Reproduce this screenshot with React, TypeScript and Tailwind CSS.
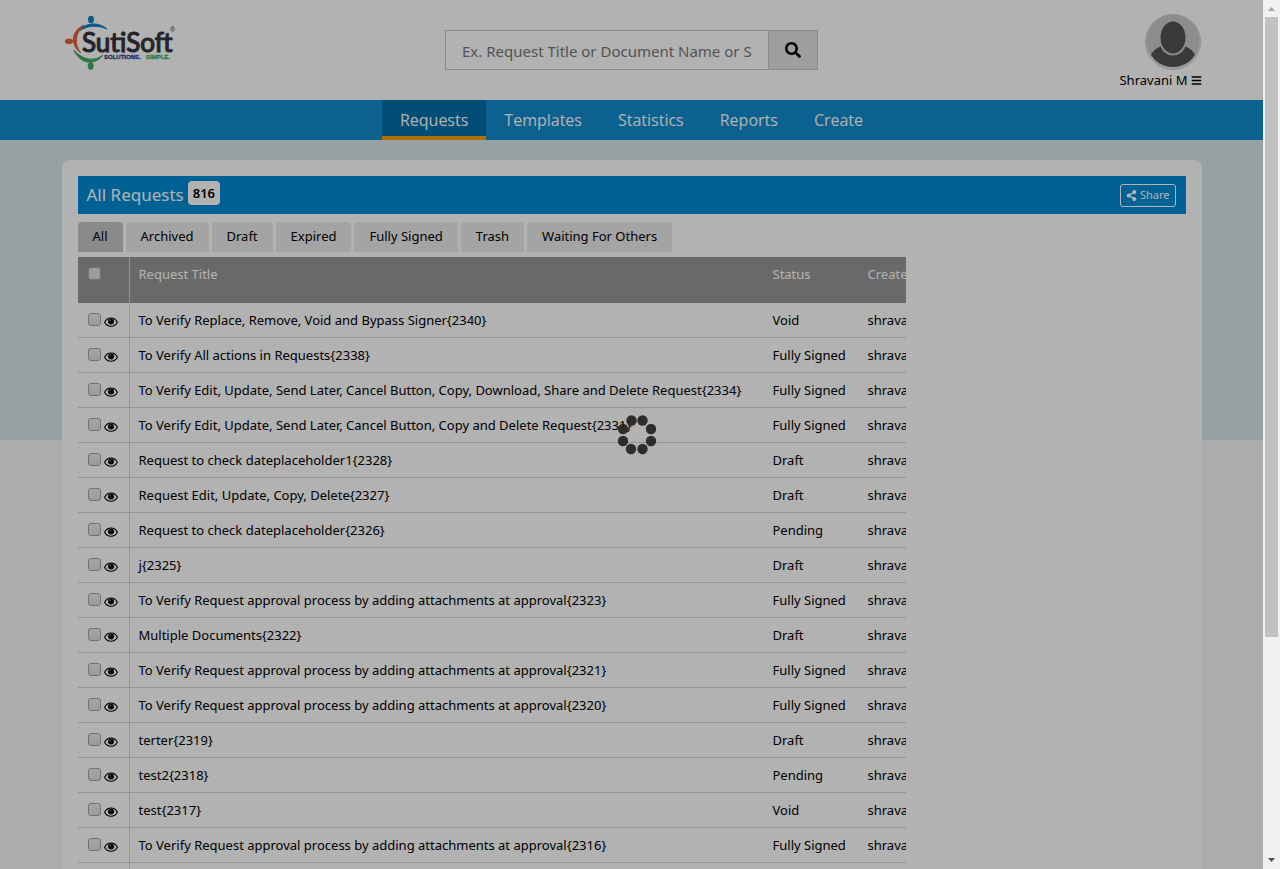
import { FaBars, FaSearch, FaShareAlt } from "react-icons/fa";

type Row = { title: string; status: string };

const rows: Row[] = [
  { title: "To Verify Replace, Remove, Void and Bypass Signer{2340}", status: "Void" },
  { title: "To Verify All actions in Requests{2338}", status: "Fully Signed" },
  { title: "To Verify Edit, Update, Send Later, Cancel Button, Copy, Download, Share and Delete Request{2334}", status: "Fully Signed" },
  { title: "To Verify Edit, Update, Send Later, Cancel Button, Copy and Delete Request{2331}", status: "Fully Signed" },
  { title: "Request to check dateplaceholder1{2328}", status: "Draft" },
  { title: "Request Edit, Update, Copy, Delete{2327}", status: "Draft" },
  { title: "Request to check dateplaceholder{2326}", status: "Pending" },
  { title: "j{2325}", status: "Draft" },
  { title: "To Verify Request approval process by adding attachments at approval{2323}", status: "Fully Signed" },
  { title: "Multiple Documents{2322}", status: "Draft" },
  { title: "To Verify Request approval process by adding attachments at approval{2321}", status: "Fully Signed" },
  { title: "To Verify Request approval process by adding attachments at approval{2320}", status: "Fully Signed" },
  { title: "terter{2319}", status: "Draft" },
  { title: "test2{2318}", status: "Pending" },
  { title: "test{2317}", status: "Void" },
  { title: "To Verify Request approval process by adding attachments at approval{2316}", status: "Fully Signed" },
];

const navItems = ["Requests", "Templates", "Statistics", "Reports", "Create"];
const tabs = ["All", "Archived", "Draft", "Expired", "Fully Signed", "Trash", "Waiting For Others"];

function Logo() {
  return (
    <svg width="112" height="58" viewBox="0 0 112 58" role="img" aria-label="SutiSoft">
      <path d="M15 17C21 9 33 7 43 15C34 11 24 11 15 17Z" fill="#0a80c4" stroke="#0a80c4" />
      <ellipse cx="27" cy="5.5" rx="3" ry="3.8" fill="#0a80c4" />
      <path d="M20 11C7 17 6 31 16.500 38.500C10 30 11 19 20 11Z" fill="#e0603a" stroke="#e0603a" />
      <ellipse cx="5" cy="27.300" rx="4" ry="2.800" fill="#e0603a" />
      <path d="M10 36C15 49 30 53 39 41C31 48 18 46 10 36Z" fill="#3fae62" stroke="#3fae62" />
      <ellipse cx="26.700" cy="52" rx="3" ry="3.800" fill="#3fae62" />
      <text x="18" y="38" fontSize="26" fill="#34363f" stroke="#34363f" strokeWidth="1.2" fontFamily="Lato, sans-serif">SutiSoft</text>
      <text x="40" y="45" fontSize="6" fontWeight="700" fill="#2c3d94" stroke="#2c3d94" strokeWidth=".3" fontFamily="'Liberation Sans', sans-serif">SOLUTIONS.</text>
      <text x="82" y="45" fontSize="6" fontWeight="700" fill="#3fae62" stroke="#3fae62" strokeWidth=".3" fontFamily="'Liberation Sans', sans-serif">SIMPLE.</text>
      <text x="106" y="18" fontSize="7" fill="#34363f" fontFamily="'Liberation Sans', sans-serif">®</text>
    </svg>
  );
}

function Avatar() {
  return (
    <svg width="56" height="56" viewBox="0 0 56 56" aria-hidden="true">
      <defs>
        <clipPath id="face">
          <circle cx="28" cy="27" r="26" />
        </clipPath>
      </defs>
      <circle cx="28" cy="28" r="27.500" fill="#e2e2e2" stroke="#d0d0d0" />
      <circle cx="28" cy="27" r="26.500" fill="#cbcbcb" />
      <path d="M3 47C6 38 11 34 15.500 32.500C18 38.500 23 41.500 28 41.500S38 38.500 40.500 32.500C45 34 50 38 53 47L40 60H16Z" fill="#525252" clipPath="url(#face)" />
      <ellipse cx="28" cy="23.500" rx="12.500" ry="16" fill="#525252" />
    </svg>
  );
}

function Eye() {
  return (
    <svg width="14" height="10" viewBox="0 0 14 10" aria-hidden="true">
      <path d="M.6 5.200C3.500-.4 10.500-.4 13.400 5.200C10.500 10.600 3.500 10.600 .6 5.200Z" fill="none" stroke="#000" strokeWidth="1.100" />
      <circle cx="7" cy="4.500" r="3" fill="#000" />
      <path d="M5.500 4.300A1.600 1.600 0 0 1 7 2.900" fill="none" stroke="#fff" strokeWidth=".6" />
    </svg>
  );
}

const box =
  "block size-[13px] shrink-0 appearance-none rounded-[3px] border border-[#a3a3a3] bg-linear-to-b from-[#ededed] to-[#dedede]";

function Loader() {
  const dots = [
    [14.500, 5.500], [25.500, 5.500], [34, 14], [34, 26],
    [25.500, 34], [14, 34], [6, 26], [6, 14],
  ];
  return (
    <svg width="40" height="40" viewBox="0 0 40 40" role="img" aria-label="Loading">
      {dots.map(([x, y]) => (
        <circle key={`${x}-${y}`} cx={x} cy={y} r="5.200" fill="#222" fillOpacity=".93" />
      ))}
    </svg>
  );
}

function Scrollbar() {
  return (
    <div aria-hidden="true" className="flex w-[17px] shrink-0 flex-col items-center bg-[#f1f1f1]">
      <svg width="17" height="17" viewBox="0 0 17 17">
        <path d="M5 11L8.500 7L12 11Z" fill="#a3a3a3" />
      </svg>
      <div className="flex w-[13px] flex-1 flex-col">
        <div className="h-[620px] bg-[#c1c1c1]" />
      </div>
      <svg width="17" height="17" viewBox="0 0 17 17">
        <path d="M5 6L8.500 10L12 6Z" fill="#505050" />
      </svg>
    </div>
  );
}

export default function App() {
  return (
    <div className="flex h-screen overflow-hidden font-['Noto_Sans','Open_Sans',sans-serif] text-[13px] leading-5 text-black">
      <div className="relative flex min-w-0 flex-1 flex-col overflow-hidden bg-white">
        <header className="flex h-[100px] shrink-0 justify-center">
          <div className="grid w-full max-w-[1140px] grid-cols-[1fr_373px_1fr]">
            <a href="#home" className="justify-self-start pt-[14px] pl-[2px]">
              <Logo />
            </a>
            <form className="mt-[30px] flex h-10 self-start" onSubmit={(e) => e.preventDefault()}>
              <input
                type="text"
                aria-label="Search requests"
                placeholder="Ex. Request Title or Document Name or S"
                className="min-w-0 flex-1 border border-r-0 border-[#c8c8c8] bg-white pt-[2px] pl-4 text-[15px] placeholder:text-[#777] placeholder:opacity-100"
              />
              <button type="submit" aria-label="Search" className="flex w-[50px] items-center justify-center border border-[#c8c8c8] bg-[#e4e4e4]">
                <FaSearch size={16} />
              </button>
            </form>
            <div className="flex flex-col items-end pt-[14px]">
              <button type="button" className="flex flex-col items-end">
                <span className="pr-px">
                  <Avatar />
                </span>
                <span className="flex items-center gap-[3px]">
                  Shravani M <FaBars size={11} />
                </span>
              </button>
            </div>
          </div>
        </header>

        <nav className="flex h-10 shrink-0 justify-center bg-[#148bcf] font-['Open_Sans','Noto_Sans',sans-serif] text-[16px] text-white">
          {navItems.map((item, i) => (
            <a
              key={item}
              href={`#${item.toLowerCase()}`}
              className={
                i === 0
                  ? "flex items-center border-b-4 border-[#f6a000] bg-[#006fab] px-[18px] pt-1"
                  : "flex items-center px-[18px]"
              }
            >
              {item}
            </a>
          ))}
        </nav>

        <main className="flex flex-1 justify-center bg-[linear-gradient(#d9e6ea_300px,#f7f7f7_300px)] pt-5">
          <section className="w-full max-w-[1140px] rounded-lg bg-white p-4">
            <div className="flex h-[38px] items-center bg-[#008cd5] pr-2 pl-[9px] text-white">
              <h1 className="text-[17px]">All Requests</h1>
              <span className="mb-1 ml-1 rounded-sm bg-white px-[5px] py-[2px] text-[13px] font-semibold text-black">816</span>
              <button type="button" className="mr-[2px] ml-auto flex h-[23px] items-center gap-[3px] rounded-[3px] border border-white px-[5px] text-[11px]">
                <FaShareAlt size={11} /> Share
              </button>
            </div>

            <div role="tablist" className="mt-2 flex gap-[3px]">
              {tabs.map((tab, i) => (
                <button
                  key={tab}
                  type="button"
                  role="tab"
                  aria-selected={i === 0}
                  className={
                    i === 0
                      ? "h-[30px] rounded-t-sm bg-[#c6c6c6] px-[15px] pb-[2px]"
                      : "h-[30px] rounded-t-sm bg-[#ebebeb] px-[15px] pb-[2px]"
                  }
                >
                  {tab}
                </button>
              ))}
            </div>

            <div className="mt-[5px] w-[828px] max-w-full overflow-hidden">
              <table className="w-[1060px] table-fixed border-separate border-spacing-0 text-left whitespace-nowrap">
                <colgroup>
                  <col className="w-[52px]" />
                  <col className="w-[634px]" />
                  <col className="w-[95px]" />
                  <col />
                </colgroup>
                <thead>
                  <tr className="h-[46px] bg-[#979797] align-top text-white">
                    <th className="border-r border-[#d6d6d6] pt-[10px] pl-[10px]">
                      <input type="checkbox" aria-label="Select all requests" className="block size-[13px] appearance-none rounded-[3px] border border-[#a3a3a3] bg-[#e0e0e0]" />
                    </th>
                    <th className="pt-[7px] pl-[9px] font-normal">Request Title</th>
                    <th className="pt-[7px] pl-[9px] font-normal">Status</th>
                    <th className="pt-[7px] pl-[9px] font-normal">Created By</th>
                  </tr>
                </thead>
                <tbody>
                  {rows.map((row) => (
                    <tr key={row.title} className="h-[35px]">
                      <td className="border-r border-b border-[#d6d6d6] pl-[10px]">
                        <div className="flex items-start gap-[3px]">
                          <input type="checkbox" aria-label={row.title} className={box} />
                          <span className="pt-1">
                            <Eye />
                          </span>
                        </div>
                      </td>
                      <td className="border-b border-[#d6d6d6] pl-[9px]">{row.title}</td>
                      <td className="border-b border-[#d6d6d6] pl-[9px]">{row.status}</td>
                      <td className="border-b border-[#d6d6d6] pl-[9px]">shravani</td>
                    </tr>
                  ))}
                  <tr className="h-[35px]">
                    <td className="border-r border-[#d6d6d6]" />
                    <td colSpan={3} />
                  </tr>
                </tbody>
              </table>
            </div>
          </section>
        </main>

        <div className="absolute inset-0 flex items-center justify-center bg-black/30 pl-[10px]">
          <Loader />
        </div>
      </div>
      <Scrollbar />
    </div>
  );
}
